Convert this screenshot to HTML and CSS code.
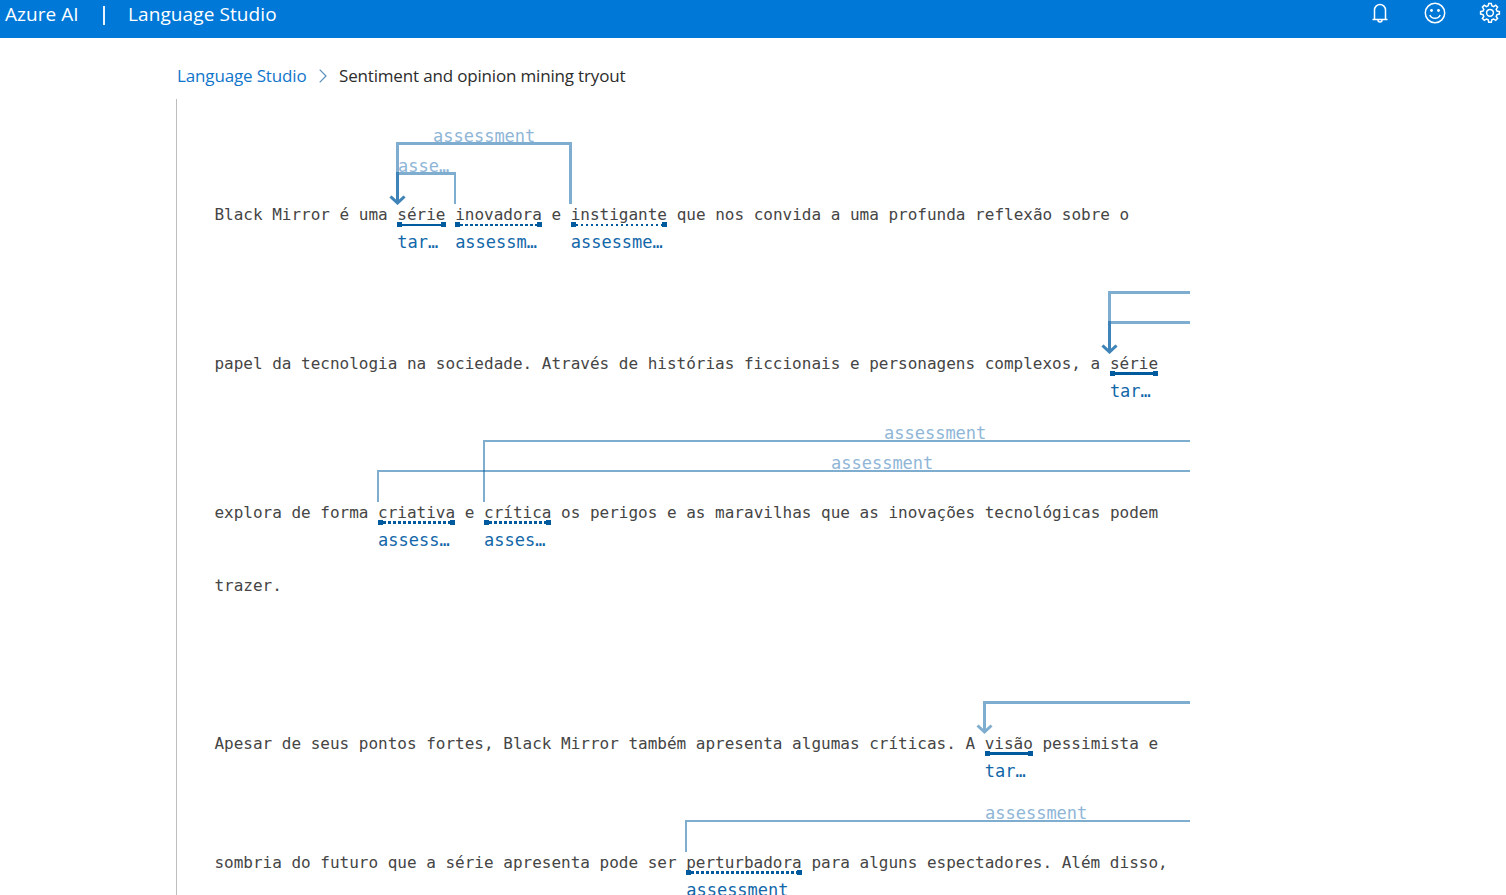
FILE: index.html
```html
<!DOCTYPE html>
<html lang="en">
<head>
<meta charset="utf-8">
<title>Language Studio</title>
<link rel="stylesheet" href="styles.css">
</head>
<body>
<header class="topbar">
  <span class="brand">Azure AI</span>
  <span class="divider"></span>
  <span class="product">Language Studio</span>
  <div class="actions">
    <svg width="18" height="22" viewBox="0 0 18 22"><path d="M1.500 17.500H16.500M3.500 17.500V8a5.500 5.500 0 0 1 11 0v9.500M7 18a2 2 0 0 0 4 0"/></svg>
    <svg width="22" height="22" viewBox="0 0 22 22"><circle cx="11" cy="11" r="9.700"/><path d="M5.800 13a5.700 5.700 0 0 0 10.400 0"/><g class="eyes"><circle cx="7.500" cy="8.500" r="1.400"/><circle cx="14.500" cy="8.500" r="1.400"/></g></svg>
    <svg width="22" height="22" viewBox="0 0 22 22"><path d="M9.200 3.800 9.700 1.400h2.600l.5 2.400 1.800.8 2.100-1.400 1.900 1.900-1.400 2.100.8 1.800 2.400.5v2.600l-2.400.5-.8 1.800 1.400 2.100-1.900 1.900-2.100-1.400-1.800.8-.5 2.400H9.700l-.5-2.400-1.800-.8-2.100 1.400-1.900-1.900 1.400-2.100-.8-1.800-2.400-.5V9.500l2.400-.5.8-1.800L3.400 5.100l1.900-1.900 2.100 1.400z"/><circle cx="11" cy="10.800" r="3.400"/></svg>
  </div>
</header>
<nav class="crumbs">
  <a class="crumb-link">Language Studio</a>
  <svg class="chevron" width="8" height="14" viewBox="0 0 8 14"><path d="M.7.700 7 7 .7 13.300"/></svg>
  <span class="crumb-current">Sentiment and opinion mining tryout</span>
</nav>
<main class="document">
  <p class="line first">Black Mirror é uma <span class="token thin">série<i class="bar"></i><b>tar…</b></span> <span class="token dash">inovadora<i class="bar"></i><b>assessm…</b></span> e <span class="token dot">instigante<i class="bar"></i><b>assessme…</b></span> que nos convida a uma profunda reflexão sobre o</p>
  <p class="line tall">papel da tecnologia na sociedade. Através de histórias ficcionais e personagens complexos, a <span class="token">série<i class="bar"></i><b>tar…</b></span></p>
  <p class="line tall">explora de forma <span class="token square">criativa<i class="bar"></i><b>assess…</b></span> e <span class="token square">crítica<i class="bar"></i><b>asses…</b></span> os perigos e as maravilhas que as inovações tecnológicas podem</p>
  <p class="line short">trazer.</p>
  <p class="line paragraph">Apesar de seus pontos fortes, Black Mirror também apresenta algumas críticas. A <span class="token">visão<i class="bar"></i><b>tar…</b></span> pessimista e</p>
  <p class="line medium">sombria do futuro que a série apresenta pode ser <span class="token square">perturbadora<i class="bar"></i><b>assessment</b></span> para alguns espectadores. Além disso,</p>
  <svg class="relations" width="1020" height="796" viewBox="177 99 1020 796">
    <g class="labels">
      <text x="433" y="142">assessment</text>
      <text x="398" y="172">asse…</text>
      <text x="884" y="439">assessment</text>
      <text x="831" y="469">assessment</text>
      <text x="985" y="819">assessment</text>
    </g>
    <g class="wide">
      <path d="M570.500 204V143.500H397.500V203M390.500 196.500l7 6.500 7-6.500"/>
      <path d="M456 173.500H397.500V203M390.500 196.500l7 6.500 7-6.500"/>
      <path d="M1190 292.500H1109.500V352M1102.500 345.500l7 6.500 7-6.500"/>
      <path d="M1190 322.500H1109.500V352M1102.500 345.500l7 6.500 7-6.500"/>
      <path d="M1190 702.500H984.500V732M977.500 725.500l7 6.500 7-6.500"/>
    </g>
    <g class="narrow">
      <path d="M455 175V204"/>
      <path d="M1190 441H484V502"/>
      <path d="M1190 471H378V502"/>
      <path d="M1190 821H686V852"/>
    </g>
  </svg>
</main>
</body>
</html>
```

FILE: styles.css
```css
* { box-sizing: border-box; }
html, body { height: 100%; }
body {
  margin: 0;
  overflow: hidden;
  display: flex;
  flex-direction: column;
  background: #fff;
  font-family: "Open Sans", "Noto Sans", sans-serif;
}
.topbar {
  height: 38px;
  flex: none;
  display: flex;
  align-items: flex-start;
  padding: 0 5px;
  background: #0078d7;
  color: #fff;
  font-size: 19px;
  line-height: 28px;
  white-space: nowrap;
}
.brand { width: 98px; letter-spacing: 0.05px; }
.divider { width: 2px; height: 19px; margin-top: 6px; background: #e6f2fc; }
.product { margin-left: 23px; letter-spacing: 0.1px; }
.actions {
  margin-left: auto;
  display: flex;
  gap: 33px;
  padding-top: 2px;
}
.actions svg { flex: none; fill: none; stroke: #fff; stroke-width: 1.500; }
.actions svg:first-child { margin-right: 2px; }
.actions .eyes { fill: #fff; stroke: none; }
.crumbs {
  height: 61px;
  flex: none;
  display: flex;
  align-items: center;
  padding: 14px 0 0 177px;
  font-size: 17px;
  line-height: 24px;
  white-space: nowrap;
}
.crumb-link { width: 142px; color: #0f76cb; letter-spacing: -0.15px; }
.chevron { margin-right: 12px; fill: none; stroke: #5a8fbd; stroke-width: 1.200; }
.crumb-current { color: #2c2c2c; letter-spacing: -0.17px; }
.document {
  position: relative;
  flex: 1;
  margin-left: 176px;
  border-left: 1px solid #bdbdbd;
  padding: 0 0 0 37.400px;
  overflow: hidden;
  color: #454545;
  font: 16px/20px "DejaVu Sans Mono", monospace;
  letter-spacing: -0.004px;
  white-space: nowrap;
}
.line { margin: 0; height: 20px; }
.first { margin-top: 106px; }
.tall { margin-top: 129px; }
.short { margin-top: 53px; }
.paragraph { margin-top: 138px; }
.medium { margin-top: 99px; }
.token { position: relative; display: inline-block; height: 20px; }
.token b {
  position: absolute;
  left: 0;
  top: 27px;
  color: #1267a9;
  font-weight: 400;
  font-size: 17px;
}
.bar {
  --ink: #005a9e;
  position: absolute;
  left: 0;
  right: 0;
  top: 18px;
  height: 3px;
  background: var(--ink);
}
.bar::before, .bar::after {
  content: "";
  position: absolute;
  top: -1px;
  width: 5px;
  height: 5px;
  background: var(--ink);
}
.bar::before { left: 0; }
.bar::after { right: 0; }
.thin .bar { top: 19px; height: 2px; }
.thin .bar::before, .thin .bar::after,
.dash .bar::before, .dash .bar::after,
.dot .bar::before, .dot .bar::after { top: -2px; }
.dash .bar {
  top: 19px;
  height: 2px;
  background: repeating-linear-gradient(90deg, var(--ink) 0 3px, transparent 3px 5px);
}
.dot .bar {
  top: 19px;
  height: 2px;
  background: repeating-linear-gradient(90deg, var(--ink) 0 2px, transparent 2px 5px);
}
.square .bar { background: repeating-linear-gradient(90deg, var(--ink) 0 3px, transparent 3px 5px); }
.relations { position: absolute; left: 0; top: 0; fill: none; stroke: #005ba1; }
.wide, .narrow { stroke-opacity: 0.5; }
.wide { stroke-width: 3; }
.narrow { stroke-width: 2; }
.labels { fill: #8fb6d7; stroke: none; font-size: 17px; }
```
